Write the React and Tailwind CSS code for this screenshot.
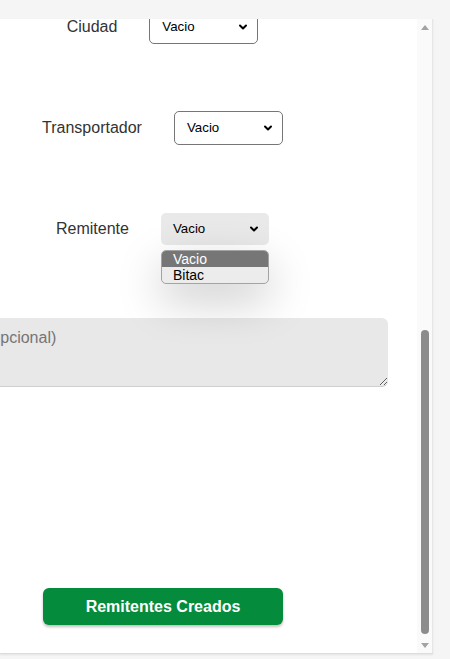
import { ChevronDown } from "lucide-react";

const FONT = { fontFamily: '"Liberation Sans", Arial, sans-serif' };

function FakeSelect({ filled = false, width = "w-[109px]" }) {
  return (
    <div
      className={
        filled
          ? `${width} h-[32px] rounded-[5px] bg-[#e9e9e9] flex items-center justify-between pl-[12px] pr-[9px]`
          : `${width} h-[34px] rounded-[5px] border border-[#767676] bg-white flex items-center justify-between pl-[12px] pr-[8px]`
      }
    >
      <span className="text-[13.3px] text-black">Vacio</span>
      <ChevronDown className="w-[12px] h-[12px] text-black" strokeWidth={4} />
    </div>
  );
}

function Row({ label, children, className = "" }) {
  return (
    <div className={`flex items-center justify-center gap-[32px] ${className}`}>
      <span className="text-[16px] text-[#333]">{label}</span>
      {children}
    </div>
  );
}

export default function App() {
  return (
    <div className="w-[450px] h-[659px] bg-[#f5f5f5] pt-[19px] overflow-hidden" style={FONT}>
      <div className="w-[433px] h-[635px] bg-white flex border-b border-[#dcdcdc] shadow-[0_1px_2px_rgba(0,0,0,0.08)]">
        {/* contenido */}
        <div className="relative w-[417px] h-full overflow-hidden">
          <div className="w-[325px] -mt-[9px]">
            <Row label="Ciudad">
              <FakeSelect />
            </Row>
            <Row label="Transportador" className="mt-[67px]">
              <FakeSelect />
            </Row>
            <Row label="Remitente" className="mt-[68px] relative z-10">
              <div className="relative">
                <FakeSelect filled width="w-[108px]" />
                <div className="absolute left-0 top-[37px] w-[108px] rounded-[5px] border border-[#a3a3a3] bg-[#ececec] overflow-hidden shadow-[0_16px_45px_rgba(0,0,0,0.22)] text-[14px] leading-[16px]">
                  <div className="bg-[#767676] text-white pl-[11px] font-medium">Vacio</div>
                  <div className="text-black pl-[11px]">Bitac</div>
                </div>
              </div>
            </Row>
          </div>

          <div className="mt-[73px] -ml-[24px] w-[412px] h-[69px]">
            <textarea
              placeholder="(opcional)"
              className="w-full h-full rounded-[6px] bg-[#e8e8e8] border-b border-[#cfcfcf] px-[10px] py-[8px] text-[16px] placeholder:text-[#757575] outline-none resize"
            />
          </div>

          <div className="w-[326px] flex justify-center mt-[201px]">
            <button
              type="button"
              className="w-[240px] h-[37px] rounded-[6px] bg-[#048c3c] text-white font-bold text-[16px] shadow-[0_2px_3px_rgba(0,0,0,0.25)]"
            >
              Remitentes Creados
            </button>
          </div>
        </div>

        {/* barra de desplazamiento */}
        <div className="w-[16px] h-full bg-[#fafafa] border-r border-[#e6e6e6] flex flex-col items-center">
          <div className="mt-[6px] w-0 h-0 border-l-[4px] border-r-[4px] border-b-[5px] border-l-transparent border-r-transparent border-b-[#a3a3a3]" />
          <div className="mt-[300px] w-[8px] h-[304px] rounded-full bg-[#8c8c8c]" />
          <div className="mt-[9px] w-0 h-0 border-l-[4px] border-r-[4px] border-t-[5px] border-l-transparent border-r-transparent border-t-[#a3a3a3]" />
        </div>
      </div>
    </div>
  );
}
